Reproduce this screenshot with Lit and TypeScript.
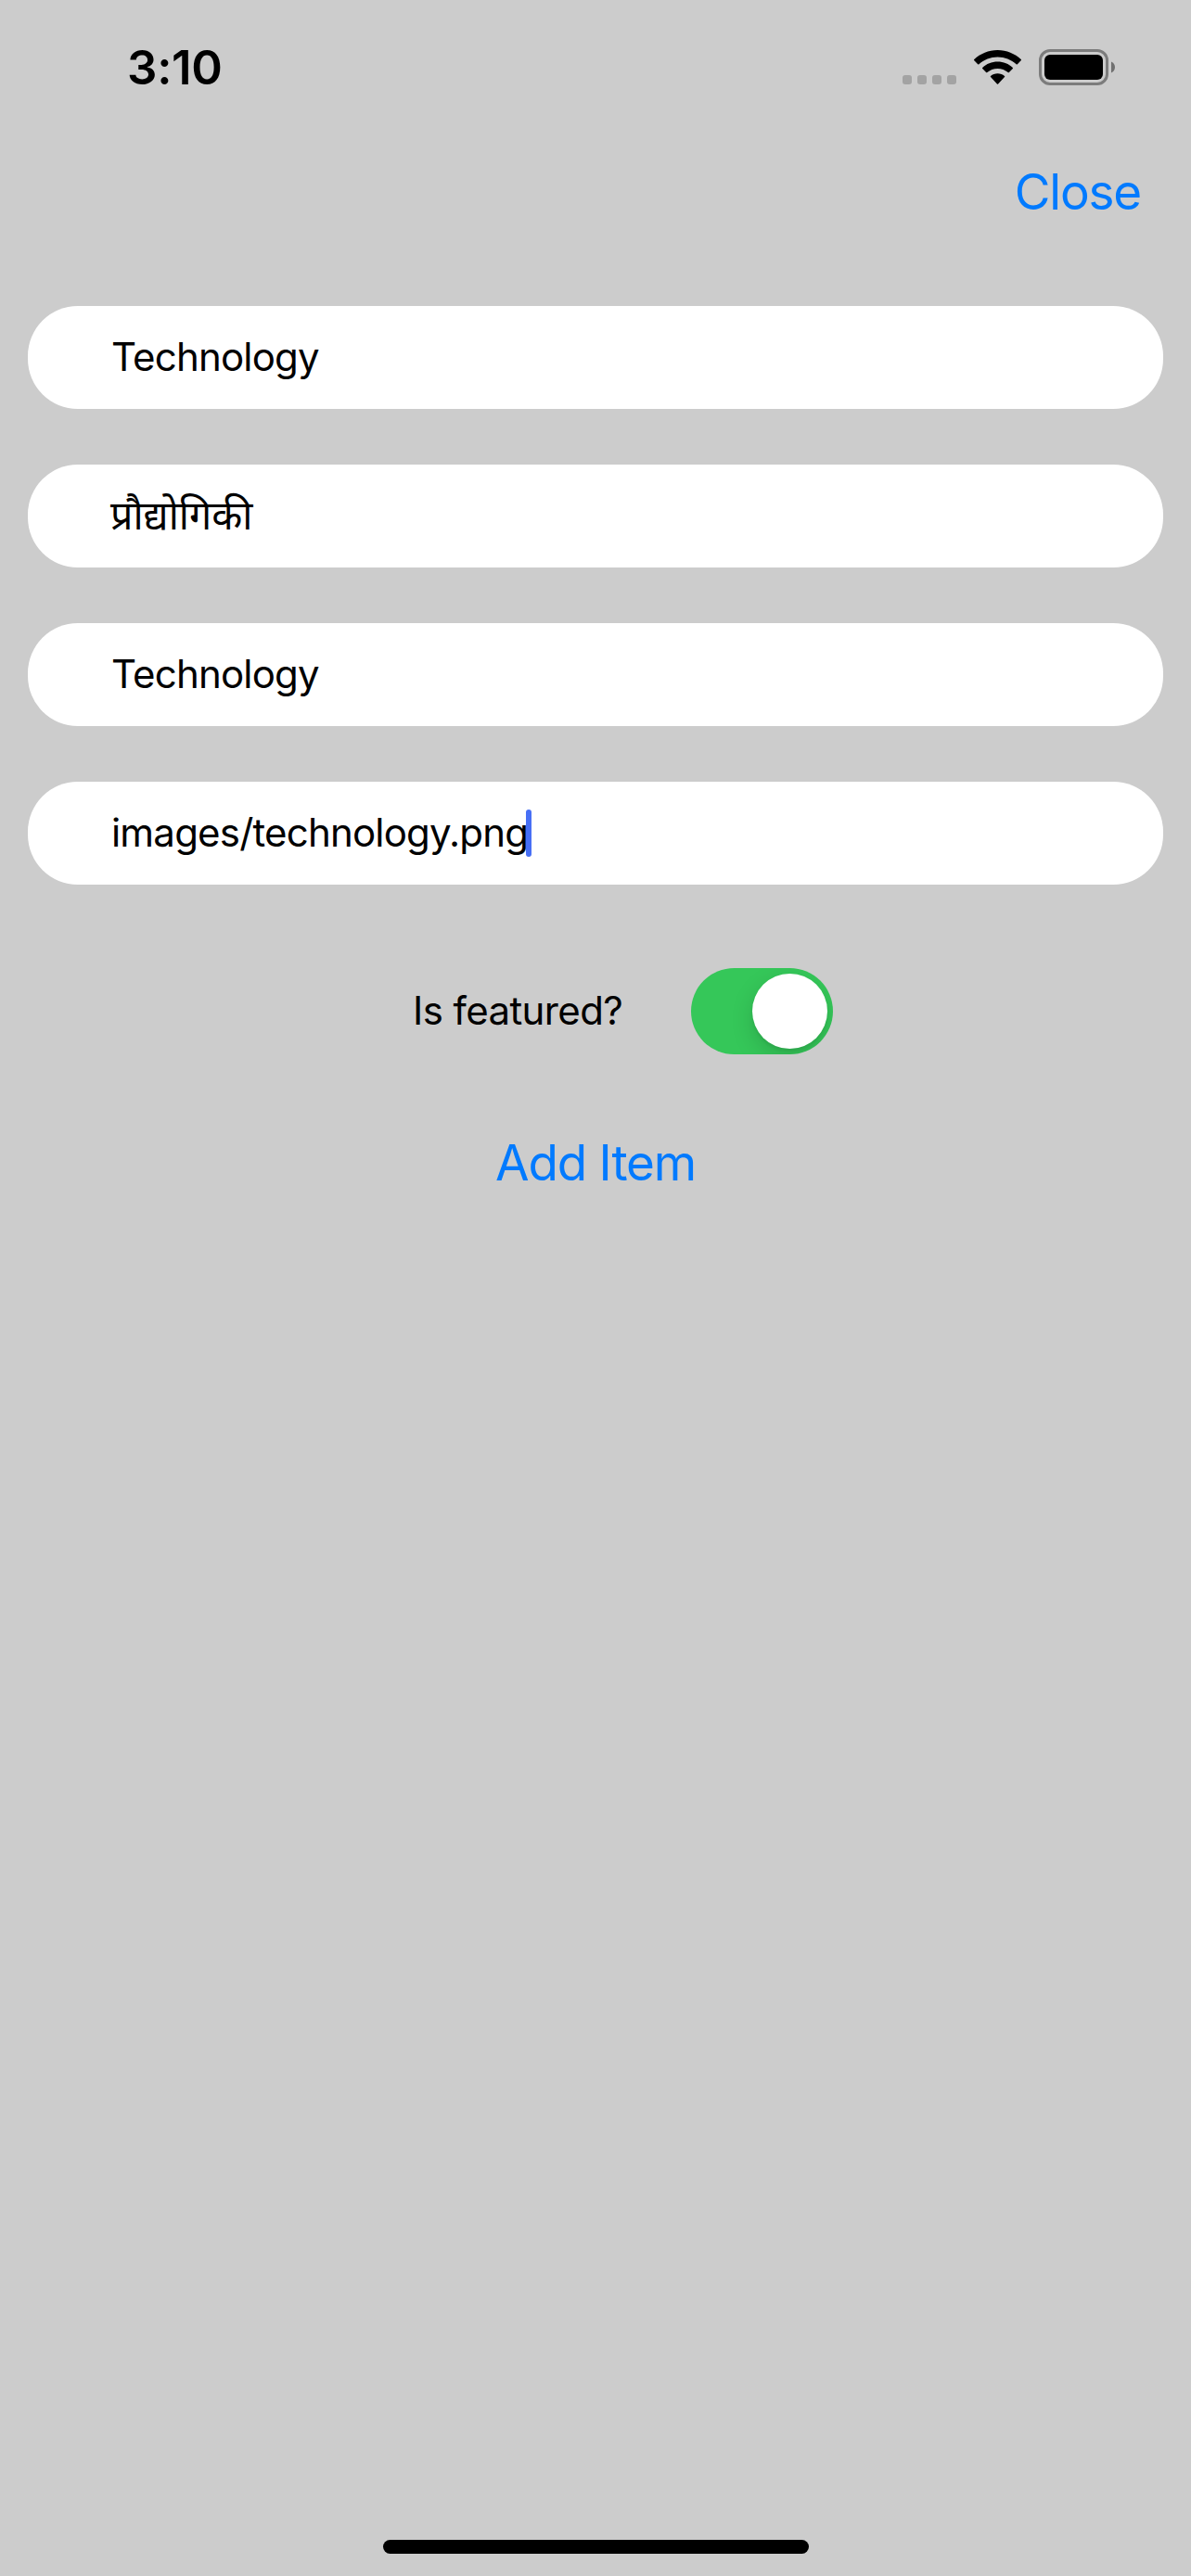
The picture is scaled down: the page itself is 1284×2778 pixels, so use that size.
import { LitElement, html, css, svg } from "lit";
import { customElement, property, state } from "lit/decorators.js";
import { classMap } from "lit/directives/class-map.js";

@customElement("status-bar")
class StatusBar extends LitElement {
  @property() time = "";

  static styles = css`
    :host {
      display: flex;
      justify-content: space-between;
      align-items: flex-start;
      height: 141px;
      box-sizing: border-box;
      padding: 53px 82px 0 137px;
    }
    .time {
      font-size: 51px;
      font-weight: 600;
      line-height: 40px;
      letter-spacing: -0.3px;
    }
    .icons {
      display: flex;
      gap: 19px;
    }
    svg {
      display: block;
    }
  `;

  render() {
    return html`
      <div class="time">${this.time}</div>
      <div class="icons">
        <svg width="58" height="39" viewBox="0 0 58 39" fill="#a3a3a3">
          ${[0, 16, 32, 48].map((x) => svg`<rect x=${x} y="28" width="10" height="10" rx="3" />`)}
        </svg>
        <svg width="51" height="39" viewBox="0 0 51 39">
          <path d="M25.5 1C35.2 1 44.1 4.800 50.700 11.100Q51.300 11.700 50.700 12.300L46.800 16.200Q46.200 16.800 45.600 16.200C40.200 11.200 33.200 8.400 25.500 8.400S10.800 11.200 5.400 16.200Q4.800 16.800 4.200 16.200L.3 12.300Q-.3 11.700 .3 11.100C6.900 4.800 15.800 1 25.500 1Z" />
          <path d="M25.500 13.500C31.800 13.500 37.500 15.900 41.800 19.900Q42.400 20.500 41.800 21.100L37.900 25Q37.300 25.600 36.700 25.100C33.700 22.400 29.800 20.900 25.500 20.900S17.300 22.400 14.300 25.100Q13.700 25.600 13.100 25L9.200 21.100Q8.600 20.500 9.200 19.900C13.500 15.900 19.200 13.500 25.500 13.500Z" />
          <path d="M25.500 26.200C28.400 26.200 31 27.200 33 28.900Q33.600 29.500 33 30.100L26.100 37.500Q25.500 38.100 24.900 37.500L18 30.100Q17.400 29.500 18 28.900C20 27.200 22.600 26.200 25.500 26.200Z" />
        </svg>
        <svg width="82" height="39" viewBox="0 0 82 39">
          <rect x="1.500" y="1.500" width="72" height="36" rx="10.500" fill="none" stroke="#7c7c7c" stroke-width="3" />
          <rect x="6" y="6" width="63" height="27" rx="6" />
          <path d="M78 13.500C80.400 14.500 82 16.800 82 19.500S80.400 24.500 78 25.500Z" fill="#707070" />
        </svg>
      </div>
    `;
  }
}

@customElement("text-entry")
class TextEntry extends LitElement {
  @property() value = "";
  @property({ type: Boolean }) focused = false;
  @property({ type: Boolean }) hindi = false;

  static styles = css`
    :host {
      display: flex;
      align-items: center;
      height: 111px;
      box-sizing: border-box;
      padding-left: 90px;
      border-radius: 54px;
      background: #fff;
      font-size: 42px;
      line-height: 52px;
    }
    .value {
      white-space: nowrap;
      letter-spacing: -0.8px;
      padding-bottom: 2px;
    }
    .hindi {
      font-size: 43px;
      letter-spacing: 0;
      margin-left: -1px;
      padding-bottom: 4px;
    }
    .caret {
      width: 6px;
      height: 51px;
      margin-left: -2px;
      border-radius: 3px;
      background: #476ff5;
    }
  `;

  render() {
    return html`
      <span class=${classMap({ value: true, hindi: this.hindi })}>${this.value}</span>
      ${this.focused ? html`<span class="caret"></span>` : ""}
    `;
  }
}

@customElement("toggle-switch")
class ToggleSwitch extends LitElement {
  @property({ type: Boolean }) on = false;

  static styles = css`
    .track {
      display: flex;
      width: 153px;
      height: 93px;
      box-sizing: border-box;
      padding: 6px;
      border-radius: 47px;
      background: #e9e9ea;
      overflow: hidden;
    }
    .on {
      justify-content: flex-end;
      background: #35c759;
    }
    .thumb {
      width: 81px;
      height: 81px;
      border-radius: 50%;
      background: #fff;
      box-shadow: 0 9px 24px rgba(0, 0, 0, 0.15), 0 3px 3px rgba(0, 0, 0, 0.06);
    }
  `;

  render() {
    return html`<div class=${classMap({ track: true, on: this.on })}><div class="thumb"></div></div>`;
  }
}

@customElement("app-root")
class AppRoot extends LitElement {
  @state() private featured = true;

  static styles = css`
    :host {
      display: flex;
      flex-direction: column;
      height: 2778px;
      box-sizing: border-box;
      padding-bottom: 24px;
      background: #ccc;
      color: #000;
      font-family: Inter, "Noto Sans", "Noto Sans Devanagari", sans-serif;
    }
    .nav {
      display: flex;
      justify-content: flex-end;
      height: 189px;
      box-sizing: border-box;
      padding: 34px 54px 0 0;
    }
    .link {
      font-size: 53px;
      line-height: 64px;
      letter-spacing: -1.200px;
      color: #007aff;
    }
    .form {
      display: flex;
      flex-direction: column;
      gap: 60px;
      padding: 0 30px;
    }
    .featured {
      display: flex;
      align-items: center;
      padding: 90px 0 0 445px;
      font-size: 42px;
      letter-spacing: -0.6px;
    }
    .question {
      width: 300px;
      padding-bottom: 3px;
      white-space: nowrap;
    }
    .add {
      display: flex;
      justify-content: center;
      padding-top: 85px;
    }
    .home {
      width: 459px;
      height: 15px;
      margin: auto auto 0 413px;
      border-radius: 8px;
      background: #000;
    }
  `;

  render() {
    return html`
      <status-bar time="3:10"></status-bar>
      <div class="nav"><span class="link">Close</span></div>
      <div class="form">
        <text-entry value="Technology"></text-entry>
        <text-entry value="प्रौद्योगिकी" hindi></text-entry>
        <text-entry value="Technology"></text-entry>
        <text-entry value="images/technology.png" focused></text-entry>
      </div>
      <div class="featured">
        <span class="question">Is featured?</span>
        <toggle-switch ?on=${this.featured}></toggle-switch>
      </div>
      <div class="add"><span class="link">Add Item</span></div>
      <div class="home"></div>
    `;
  }
}
